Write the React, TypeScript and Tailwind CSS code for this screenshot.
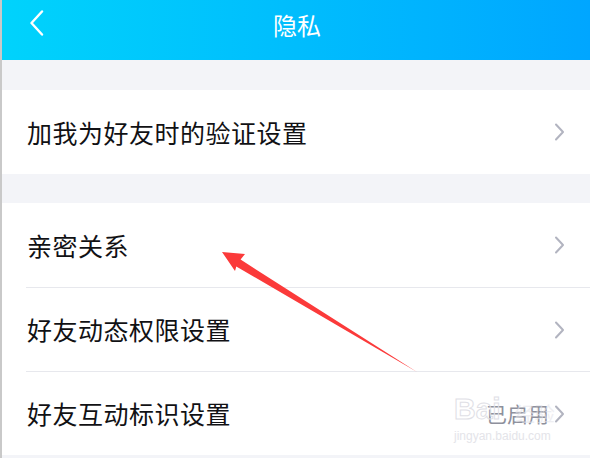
const FONT = { fontFamily: '"Noto Sans CJK SC", "Noto Sans", sans-serif' };

type Row = { label: string; value?: string };

const groups: Row[][] = [
  [{ label: "加我为好友时的验证设置" }],
  [
    { label: "亲密关系" },
    { label: "好友动态权限设置" },
    { label: "好友互动标识设置", value: "已启用" },
  ],
];

const Chevron = () => {
  return (
    <svg width="11" height="18" viewBox="0 0 11 18" fill="none">
      <path
        d="M2 1.5 L9 9 L2 16.5"
        stroke="#b2b4c0"
        strokeWidth="2"
        strokeLinecap="round"
        strokeLinejoin="round"
      />
    </svg>
  );
};

const SettingRow = ({ row, tall }: { row: Row; tall: boolean }) => {
  return (
    <div
      className={`flex items-center justify-between pl-[25px] pr-[25px] ${
        tall ? "h-[84px]" : "h-[83px]"
      }`}
    >
      <span className="text-[25px] leading-none text-[#111114] tracking-[0.5px]">
        {row.label}
      </span>
      <div className="flex items-center gap-[5px]">
        {row.value && (
          <span className="text-[21px] leading-none text-[#8e909c]">{row.value}</span>
        )}
        <Chevron />
      </div>
    </div>
  );
};

const Arrow = () => {
  // tip (220,252) -> tail (415,372)
  return (
    <svg
      className="absolute left-0 top-0 pointer-events-none"
      width="590"
      height="458"
      viewBox="0 0 590 458"
    >
      <polygon
        points="220,252 243,254 238.6,259.6 415,372 234.3,266.5 233,271"
        fill="#fb3a3a"
      />
    </svg>
  );
};

const Watermark = () => {
  return (
    <div className="absolute left-[452px] top-[394px] pointer-events-none select-none">
      <div className="flex items-end">
        <span
          className="text-[30px] font-bold leading-none text-transparent"
          style={{
            fontFamily: '"Liberation Sans", sans-serif',
            WebkitTextStroke: "1px #e0e0e6",
          }}
        >
          Bai
        </span>
        <span className="ml-[14px] text-[20px] leading-none text-[#e4e4ea] opacity-60">
          经验
        </span>
      </div>
      <div
        className="mt-[6px] text-[12px] leading-none text-[#e4e4e9]"
        style={{ fontFamily: '"Liberation Sans", sans-serif' }}
      >
        jingyan.baidu.com
      </div>
    </div>
  );
};

const App = () => {
  return (
    <div
      className="relative w-[590px] h-[458px] overflow-hidden bg-[#f3f4f8] border-l-2 border-[#c9c9c9]"
      style={FONT}
    >
      <div className="relative flex h-[60px] items-center justify-center bg-gradient-to-r from-[#00d3fc] via-[#00bdfd] to-[#00a6ff]">
        <svg
          className="absolute left-[27px] top-[10px]"
          width="16"
          height="26"
          viewBox="0 0 16 26"
          fill="none"
        >
          <path
            d="M13 1.5 L2.5 13 L13 24.5"
            stroke="white"
            strokeWidth="2.4"
            strokeLinecap="round"
            strokeLinejoin="round"
          />
        </svg>
        <span className="text-[24px] leading-none text-white -mt-[10px] ml-[2px]">隐私</span>
      </div>

      <div className="h-[30px]" />

      <div className="bg-white">
        <SettingRow row={groups[0][0]} tall />
      </div>

      <div className="h-[29px]" />

      <div className="bg-white">
        {groups[1].map((row, index) => {
          return (
            <div key={index}>
              {index > 0 && <div className="ml-[24px] h-px bg-[#e7e8ed]" />}
              <SettingRow row={row} tall={index === 0} />
            </div>
          );
        })}
      </div>

      <Watermark />
      <Arrow />
    </div>
  );
};

export default App;
